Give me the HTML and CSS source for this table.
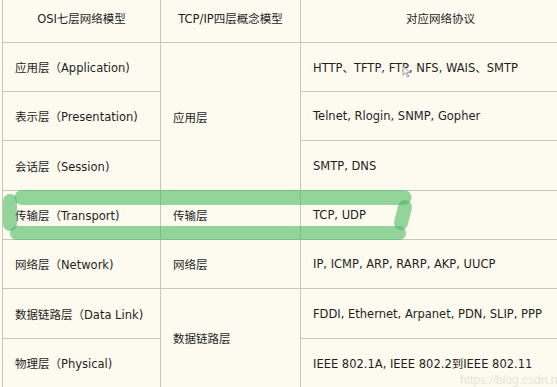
FILE: index.html
```html
<!DOCTYPE html>
<html lang="zh">
<head>
<meta charset="utf-8">
<link rel="stylesheet" href="styles.css">
</head>
<body>
<div class="page">
  <div class="grid">
    <div class="cell head">OSI七层网络模型</div>
    <div class="cell head">TCP/IP四层概念模型</div>
    <div class="cell head">对应网络协议</div>

    <div class="cell">应用层（Application)</div>
    <div class="cell span3">应用层</div>
    <div class="cell">HTTP、TFTP, FTP, NFS, WAIS、SMTP</div>

    <div class="cell">表示层（Presentation)</div>
    <div class="cell">Telnet, Rlogin, SNMP, Gopher</div>

    <div class="cell">会话层（Session)</div>
    <div class="cell">SMTP, DNS</div>

    <div class="cell">传输层（Transport)</div>
    <div class="cell">传输层</div>
    <div class="cell">TCP, UDP</div>

    <div class="cell">网络层（Network)</div>
    <div class="cell">网络层</div>
    <div class="cell">IP, ICMP, ARP, RARP, AKP, UUCP</div>

    <div class="cell">数据链路层（Data Link)</div>
    <div class="cell span2">数据链路层</div>
    <div class="cell">FDDI, Ethernet, Arpanet, PDN, SLIP, PPP</div>

    <div class="cell">物理层（Physical)</div>
    <div class="cell">IEEE 802.1A, IEEE 802.2到IEEE 802.11</div>
  </div>

  <svg class="marker" width="557" height="387" viewBox="0 0 557 387">
    <path class="stroke" d="M22 197.5 L404 197.5" stroke-width="15"/>
    <path class="stroke" d="M17 233 L399 233" stroke-width="14"/>
    <path class="stroke" d="M10 201 L10 224" stroke-width="14"/>
    <path class="stroke" d="M405 207 L401 223" stroke-width="14"/>
  </svg>

  <svg class="cursor" width="12" height="14" viewBox="0 0 12 14">
    <path d="M1 1 L1 10 L3.5 8 L5.5 12 L7 11.3 L5 7.4 L8 7.4 Z" fill="#f4f4f4" stroke="#888" stroke-width="0.8"/>
  </svg>

  <div class="watermark">https://blog.csdn.net/qq_41923622</div>
</div>
</body>
</html>
```

FILE: styles.css
```css
html, body {
  margin: 0;
  padding: 0;
  background: #fdfbef;
}

.page {
  position: relative;
  width: 557px;
  height: 387px;
  overflow: hidden;
  font-family: "DejaVu Sans", "Noto Sans CJK SC", sans-serif;
  font-size: 11.5px;
  color: #1e1e1e;
}

.grid {
  display: grid;
  grid-template-columns: 158px 140px 280px;
  grid-template-rows: 50px 49px 49px 50px 49px 49px 50px 49px;
  margin-top: -7px;
  margin-left: 2px;
  border-left: 1px solid #c5c5b8;
  width: 578px;
}

.cell {
  display: flex;
  align-items: center;
  padding: 0 12px;
  border-right: 1px solid #c5c5b8;
  border-bottom: 1px solid #c5c5b8;
  white-space: nowrap;
}

.head {
  justify-content: center;
}

.span3 {
  grid-row: span 3;
}

.span2 {
  grid-row: span 2;
}

.marker {
  position: absolute;
  left: 0;
  top: 0;
  pointer-events: none;
}

.stroke {
  fill: none;
  stroke: rgba(70, 185, 95, 0.58);
  stroke-linecap: round;
}

.cursor {
  position: absolute;
  left: 402px;
  top: 65px;
}

.watermark {
  position: absolute;
  left: 460px;
  top: 373px;
  font-family: "Liberation Sans", sans-serif;
  font-size: 12px;
  color: #e6e4da;
  white-space: nowrap;
}
```
